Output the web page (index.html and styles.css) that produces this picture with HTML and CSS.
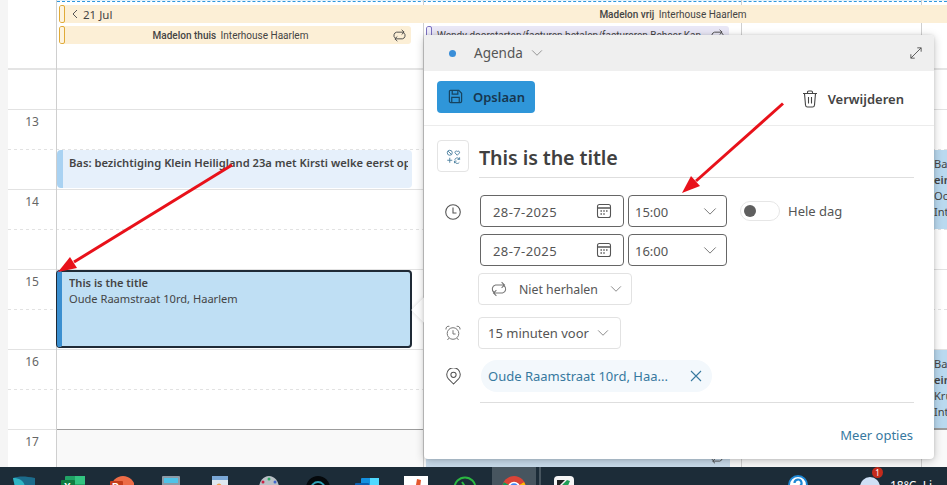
FILE: index.html
```html
<!DOCTYPE html>
<html lang="nl">
<head>
<meta charset="utf-8">
<title>Agenda</title>
<link rel="stylesheet" href="styles.css">
</head>
<body>
<svg class="sprites" width="0" height="0" aria-hidden="true">
  <symbol id="chev" viewBox="0 0 16 10"><path d="M1.500 1.500 8 8l6.500-6.500" fill="none" stroke="currentColor" stroke-width="1"/></symbol>
  <symbol id="cal" viewBox="0 0 16 16"><rect x="1.500" y="1.500" width="13" height="13" rx="2" fill="none" stroke="currentColor" stroke-width="1.100"/><path d="M1.500 5h13" stroke="currentColor" stroke-width="1.600"/><path d="M4.500 8h1.400M7.300 8h1.400M10.100 8h1.400M4.500 11h1.400M7.300 11h1.400" stroke="currentColor" stroke-width="1.300"/></symbol>
  <symbol id="rep" viewBox="0 0 18 18"><path d="M4 12.200A4 4 0 0 1 5.500 5h9M11.600 2.200 14.500 5l-2.900 2.800M14 5.800A4 4 0 0 1 12.500 13h-9M6.400 10.200 3.500 13l2.900 2.800" fill="none" stroke="currentColor" stroke-width="1.100"/></symbol>
</svg>
<div class="app">
  <main class="cal">
    <div class="rail"></div>
    <div class="sheet">
      <section class="allday">
        <div class="allday-time"></div>
        <div class="allday-body">
          <div class="dashline"></div>
          <div class="bar bar-amber bar-wide">
            <span class="mark"></span>
            <span class="bar-prev"><svg class="prev-ic" viewBox="0 0 6 10"><path d="M5 1 1 5l4 4" fill="none" stroke="currentColor"/></svg>21 Jul</span>
            <span class="bar-center"><b>Madelon vrij</b> Interhouse Haarlem</span>
          </div>
          <div class="allday-row">
            <div class="bar bar-amber bar-first">
              <span class="mark"></span>
              <span class="bar-center"><b>Madelon thuis</b> Interhouse Haarlem</span>
              <svg class="bar-rep"><use href="#rep"/></svg>
            </div>
            <div class="bar bar-purple">
              <span class="mark mark-purple"></span>
              <span class="bar-left">Wendy doorstarten/facturen betalen/factureren Beheer Kan</span>
              <svg class="bar-rep"><use href="#rep"/></svg>
            </div>
          </div>
        </div>
      </section>
      <section class="hours">
        <div class="hour hour-short"><span class="hlabel"></span></div>
        <div class="hour"><span class="hlabel">13</span></div>
        <div class="hour"><span class="hlabel">14</span></div>
        <div class="hour"><span class="hlabel">15</span></div>
        <div class="hour"><span class="hlabel">16</span></div>
        <div class="hour hour-last"><span class="hlabel">17</span><div class="last-cell"></div></div>
      </section>
      <div class="vlines"><i></i><i></i><i></i><i></i></div>
    </div>

    <div class="event event-soft"><span class="event-title">Bas: bezichtiging Klein Heiligland 23a met Kirsti welke eerst op</span></div>
    <div class="event event-sel">
      <span class="event-title">This is the title</span>
      <span class="event-line">Oude Raamstraat 10rd, Haarlem</span>
    </div>
    <div class="event event-under"><svg class="under-rep"><use href="#rep"/></svg></div>
    <div class="event event-side event-side-a">
      <span class="event-line">Ba</span><span class="event-title">ein</span><span class="event-line">Oc</span><span class="event-line">Int</span>
    </div>
    <div class="event event-side event-side-b">
      <span class="event-line">Ba</span><span class="event-title">ein</span><span class="event-line">Kru</span><span class="event-line">Int</span>
    </div>

    <div class="beak"></div>
    <aside class="popup">
      <header class="pop-head">
        <span class="dot"></span>
        <span class="pop-cal">Agenda</span>
        <svg class="chev chev-head"><use href="#chev"/></svg>
        <svg class="expand" viewBox="0 0 14 14"><path d="M8.500 1H13v4.500M13 1 1 13M1 8.500V13h4.500" fill="none" stroke="currentColor" stroke-width="1.100"/></svg>
      </header>
      <div class="pop-tools">
        <button class="btn-save">
          <svg class="save-ic" viewBox="0 0 16 16"><path d="M2.500 1.500h9l3 3v8.500a1.500 1.500 0 0 1-1.500 1.500H3A1.500 1.500 0 0 1 1.500 13V2.500a1 1 0 0 1 1-1z" fill="none" stroke="currentColor" stroke-width="1.300"/><path d="M4.500 2v3.500h6V2M4 14.500V9h8v5.500" fill="none" stroke="currentColor" stroke-width="1.300"/></svg>
          Opslaan
        </button>
        <span class="btn-del">
          <svg class="trash" viewBox="0 0 16 18"><path d="M1 3.500h14M5.500 3.500V2.200c0-.7.500-1.200 1.200-1.200h2.600c.7 0 1.200.5 1.200 1.200v1.300M2.500 3.500l1 11.500c.1 1.100.9 2 2 2h5c1.100 0 1.900-.9 2-2l1-11.500M6.500 7v6.500M9.500 7v6.500" fill="none" stroke="currentColor" stroke-width="1.100"/></svg>
          Verwijderen
        </span>
      </div>
      <div class="pop-body">
        <div class="title-row">
          <span class="cat-box">
            <svg class="cat-ic" viewBox="0 0 18 18"><g fill="none" stroke="currentColor" stroke-width="1.100"><circle cx="4.500" cy="4.500" r="3"/><path d="M2.500 2.500l4 4"/><path d="M13.500 7.500 10.800 4.600a1.600 1.600 0 0 1 2.700-1.600 1.600 1.600 0 0 1 2.700 1.600z"/><path d="M4.500 10.500v6M1.500 13.500h6M10.500 13a3 3 0 0 1 5-1.500l.8.800M16 16a3 3 0 0 1-5 0l-.8-.8M16.300 10v2.500h-2.500M10.200 17v-2.500h2.500"/></g></svg>
          </span>
          <h1 class="title">This is the title</h1>
        </div>

        <div class="form-row form-dates">
          <svg class="side-ic" viewBox="0 0 16 16"><circle cx="8" cy="8" r="7.300" fill="none" stroke="currentColor" stroke-width="1.100"/><path d="M8 3.500V9h3.500" fill="none" stroke="currentColor" stroke-width="1.100"/></svg>
          <div class="dates">
            <div class="date-line">
              <span class="field f-date"><span class="date-text">28-7-2025</span><svg class="cal-ic"><use href="#cal"/></svg></span>
              <span class="field f-time"><span class="date-time">15:00</span><svg class="chev chev-time"><use href="#chev"/></svg></span>
              <span class="toggle"><span class="knob"></span></span>
              <span class="toggle-label">Hele dag</span>
            </div>
            <div class="date-line">
              <span class="field f-date"><span class="date-text">28-7-2025</span><svg class="cal-ic"><use href="#cal"/></svg></span>
              <span class="field f-time"><span class="date-time">16:00</span><svg class="chev chev-time"><use href="#chev"/></svg></span>
            </div>
          </div>
        </div>

        <div class="form-row form-repeat">
          <span class="drop drop-rep">
            <svg class="rep-ic"><use href="#rep"/></svg>
            Niet herhalen
            <svg class="chev chev-end"><use href="#chev"/></svg>
          </span>
        </div>

        <div class="form-row form-alarm">
          <svg class="side-ic side-alarm" viewBox="0 0 16 16"><g fill="none" stroke="currentColor" stroke-width="1"><circle cx="8" cy="8.500" r="5.800"/><path d="M8 5.200v3.800h2.600M1 4.500C.6 2.500 2.300.7 4.400 1.300M15 4.500c.4-2-1.300-3.800-3.400-3.200M3.800 13.200 2.500 15M12.200 13.200l1.300 1.800"/></g></svg>
          <span class="drop drop-alarm">15 minuten voor<svg class="chev"><use href="#chev"/></svg></span>
        </div>

        <div class="form-row form-loc">
          <svg class="side-ic side-pin" viewBox="0 0 16 18"><g fill="none" stroke="currentColor" stroke-width="1.100"><path d="M8 17 2.600 11.600a7.200 7.200 0 1 1 10.800 0z"/><circle cx="8" cy="7.200" r="2.800"/></g></svg>
          <span class="pill">
            <span class="pill-text">Oude Raamstraat 10rd, Haa...</span>
            <svg class="pill-x" viewBox="0 0 12 12"><path d="M1 1l10 10M11 1 1 11" fill="none" stroke="currentColor" stroke-width="1.100"/></svg>
          </span>
        </div>

        <div class="rule"></div>
        <a class="more">Meer opties</a>
      </div>
    </aside>

    <svg class="arrows" viewBox="0 0 947 467">
      <path class="arrow-line" d="M232 165 74 262"/>
      <path class="arrow-head" d="M58 272 77 268 70 257z"/>
      <path class="arrow-line" d="M783 103.500 696 181"/>
      <path class="arrow-head" d="M682 193 700 186 691 176z"/>
    </svg>
  </main>

  <footer class="taskbar">
    <div class="tb-apps">
      <svg class="tb-ic" viewBox="0 0 24 24"><path d="M1 2c6-2 12-2 22 0v22H6z" fill="#1c6c8c"/><path d="M1 2c7 0 11 3 12 9L9 24H6z" fill="#2fb5c4"/></svg>
      <svg class="tb-ic" viewBox="0 0 24 24"><rect x="4" width="20" height="24" rx="1" fill="#21a366"/><rect x="14" width="10" height="8" fill="#33c481"/><rect y="4" width="14" height="14" rx="1" fill="#107c41"/><text class="tb-letter" x="3" y="15">X</text></svg>
      <svg class="tb-ic" viewBox="0 0 24 24"><circle cx="13" cy="12" r="12" fill="#ed6c47"/><rect y="5" width="13" height="14" rx="1" fill="#c43e1c"/><text class="tb-letter" x="2" y="15">P</text></svg>
      <svg class="tb-ic tb-narrow" viewBox="0 0 18 24"><rect width="18" height="24" rx="1" fill="#8c9aa6"/><rect x="2" y="2" width="14" height="5" fill="#4fc3e8"/><path d="M2 9h4v3H2zM7 9h4v3H7zM12 9h4v3h-4z" fill="#3f4a55"/></svg>
      <svg class="tb-ic tb-narrow" viewBox="0 0 16 24"><rect width="16" height="24" fill="#dfe8f0"/><rect width="16" height="4" fill="#7aa7d6"/><circle cx="7" cy="10" r="2.500" fill="#f0a050"/><path d="M11 9h4v1.500h-4z" fill="#7aa7d6"/></svg>
      <svg class="tb-ic" viewBox="0 0 24 24"><ellipse cx="12" cy="12" rx="10" ry="12" fill="#b9c0c6"/><circle cx="6" cy="6" r="1.500" fill="#c24"/><circle cx="12" cy="3" r="1.500" fill="#3a6"/><circle cx="18" cy="6" r="1.500" fill="#46c"/></svg>
      <svg class="tb-ic" viewBox="0 0 24 24"><circle cx="12" cy="12" r="12" fill="#05090c"/><path d="M5 13a7 7 0 0 1 14 0M8 14a4 4 0 0 1 8 0" fill="none" stroke="#2f9fb3" stroke-width="1.800"/></svg>
      <svg class="tb-ic" viewBox="0 0 24 24"><rect x="6" y="2" width="18" height="22" rx="1" fill="#1490df"/><rect x="15" y="2" width="9" height="7" fill="#50d9ff"/><rect y="7" width="14" height="14" rx="1" fill="#0a5fb0"/><circle cx="7" cy="14" r="3" fill="none" stroke="#fff" stroke-width="1.500"/></svg>
      <svg class="tb-ic" viewBox="0 0 24 24"><rect width="24" height="24" fill="#fff"/><path d="M8 11l4-2 1-6 4 1-1 8 3 2-2 8H8z" fill="#e4572e"/></svg>
      <svg class="tb-ic" viewBox="0 0 24 24"><circle cx="12" cy="12" r="10.500" fill="none" stroke="#2bb741" stroke-width="2"/><path d="M9 6l2 3-1 2 4 4 2-1 2 2" fill="none" stroke="#2bb741" stroke-width="2"/></svg>
      <span class="tb-active">
        <svg class="tb-ic" viewBox="0 0 24 24"><circle cx="12" cy="12" r="12" fill="#db4437"/><path d="M12 12 22 6a12 12 0 0 1-8 18z" fill="#fbbc05"/><path d="M12 12 14 24A12 12 0 0 1 2 6z" fill="#0f9d58"/><path d="M12 6a12 12 0 0 1 10 0l-10 6L2 6z" fill="#db4437"/><circle cx="12" cy="12" r="5.500" fill="#4285f4" stroke="#fff" stroke-width="1.500"/></svg>
      </span>
      <svg class="tb-ic tb-last" viewBox="0 0 20 24"><rect width="20" height="24" rx="4" fill="#f5f5f5"/><path d="M5 12l8-8 3 1-3 7 3 2-8 6z" fill="#1f9d55"/><path d="M3 4h8L5 10H3z" fill="#222"/></svg>
    </div>
    <div class="tb-tray">
      <svg class="tb-help" viewBox="0 0 20 20"><circle cx="10" cy="10" r="9" fill="#fff" stroke="#1e88d6" stroke-width="2"/><path d="M6.500 8a3.500 3.500 0 1 1 5 3.200c-1 .6-1.500 1-1.500 2.300" fill="none" stroke="#1e88d6" stroke-width="2.200"/></svg>
      <span class="tb-weather"><span class="cloud"></span><span class="badge">1</span></span>
      <span class="tb-temp">18°C&nbsp;&nbsp;Li</span>
    </div>
  </footer>
</div>
</body>
</html>
```

FILE: styles.css
```css
* { box-sizing: border-box; }
html, body { margin: 0; height: 100%; }
body {
  font-family: "Noto Sans", "Open Sans", "Liberation Sans", sans-serif;
  color: #444;
  background: #fff;
  overflow: hidden;
}
.sprites { position: absolute; }
.app { width: 947px; height: 485px; display: flex; flex-direction: column; overflow: hidden; }

/* Calendar sheet */
.cal { position: relative; flex: 1; min-height: 0; display: flex; overflow: hidden; background: #fff; }
.rail { width: 8px; background: #f5f5f5; flex: none; }
.sheet { position: relative; flex: 1; min-width: 0; display: flex; flex-direction: column; }

.allday { height: 70px; flex: none; display: flex; border-bottom: 2px solid #e4e4e4; }
.allday-time { width: 48px; flex: none; }
.allday-body { flex: 1; min-width: 0; padding-left: 1px; display: flex; flex-direction: column; }
.dashline { height: 5px; border-top: 1px solid #e4f2fb; }
.dashline::after { content: ""; display: block; border-top: 1px dashed #2f97dc; }
.bar {
  position: relative; z-index: 1; display: flex; align-items: center; height: 18px;
  font-size: 10.500px; color: #444; border-radius: 3px; overflow: hidden;
}
.bar b { font-weight: 500; margin-right: 2px; }
.bar-amber { background: #fcefd6; }
.bar-wide { margin-left: 2px; border-radius: 3px 0 0 3px; }
.mark {
  position: absolute; left: 0; top: 0; bottom: 0; width: 6px;
  border: 1px solid #e0aa38; border-radius: 2px; background: #fdf3df;
}
.mark-purple { border-color: #7a6fc0; background: #efedfa; bottom: -8px; }
.bar-prev { position: absolute; left: 13px; display: flex; align-items: center; gap: 5px; font-size: 11.500px; }
.prev-ic { width: 6px; height: 10px; color: #555; }
.bar-center { flex: 1; text-align: center; white-space: nowrap; font-family: Roboto, sans-serif; font-size: 10px; padding-left: 12px; }
.bar-wide .bar-center { padding-left: 340px; flex: none; width: 888px; }
.bar-left { padding-left: 11px; white-space: nowrap; overflow: hidden; flex: 1; font-family: Roboto, sans-serif; font-size: 10px; }
.bar-rep { flex: none; width: 15px; height: 15px; margin: 0 4px 0 2px; color: #444; }
.allday-row { display: flex; margin-top: 3px; margin-left: 2px; }
.bar-first { width: 352px; }
.bar-purple { width: 303px; margin-left: 15px; background: #e9e7f6; }

/* Hour rows */
.hours { flex: 1; min-height: 0; display: flex; flex-direction: column; }
.hour {
  display: flex; height: 80px; flex: none; border-bottom: 1px solid #e2e2e2;
  background: repeating-linear-gradient(90deg, #e2e2e2 0 3px, transparent 3px 6px) 0 39px / 100% 1px no-repeat;
}
.hour-short { height: 40px; background: none; }
.hour-last { flex: 1; height: auto; border-bottom: 0; background: none; }
.hlabel { width: 48px; flex: none; text-align: center; font-size: 12px; line-height: 16px; padding-top: 4px; color: #666; }
.last-cell { flex: 1; background: #f9f9f9; border-top: 1px solid #9c9c9c; margin-top: -1px; }
.vlines { position: absolute; inset: 0 0 0 48px; display: flex; pointer-events: none; }
.vlines i { display: block; border-left: 1px solid #cfcfcf; }
.vlines i:nth-child(1) { width: 367px; }
.vlines i:nth-child(2) { width: 318px; }
.vlines i:nth-child(3) { width: 180px; }
.vlines i:nth-child(4) { flex: 1; }

/* Events lie over the hour grid */
.event { position: absolute; display: flex; flex-direction: column; overflow: hidden; font-size: 11.100px; line-height: 16px; color: #444; white-space: nowrap; }
.event-title { font-weight: 600; overflow: hidden; }
.event-soft {
  left: 57px; top: 150px; width: 355px; height: 38px; border-radius: 4px;
  background: #e6f0fb; border-left: 6px solid #a9d2f2; padding: 5px 4px 0 6px; font-size: 11.200px;
}
.event-sel {
  left: 57px; top: 270px; width: 355px; height: 78px; border-radius: 4px;
  background: #bfdff4; border: 2px solid #1f2a36; border-left: 5px solid #3a8fd0;
  box-shadow: -1px 0 0 #1f2a36; padding: 3px 0 0 7px;
}
.event-under { left: 426px; top: 435px; width: 304px; height: 32px; background: #c9dcec; }
.under-rep { position: absolute; left: 284px; top: 16px; width: 14px; height: 14px; color: #444; }
.event-side { left: 922px; width: 25px; padding: 6px 0 0 12px; background: #b9d9ef; }
.event-side-a { top: 150px; height: 79px; }
.event-side-b { top: 350px; height: 79px; border-bottom: 1px solid #9c9c9c; }

/* Popup */
.beak {
  position: absolute; left: 415px; top: 301px; width: 18px; height: 18px;
  background: #fff; transform: rotate(45deg); z-index: 1;
  box-shadow: 0 0 4px rgba(0, 0, 0, .14);
}
.popup {
  position: absolute; left: 424px; top: 35px; width: 510px; height: 424px;
  background: #fff; border-radius: 4px; overflow: hidden; z-index: 2;
  box-shadow: 0 2px 10px rgba(0, 0, 0, .22), 0 0 3px rgba(0, 0, 0, .12);
  display: flex; flex-direction: column;
}
.pop-head { height: 36px; flex: none; background: #efefef; display: flex; align-items: center; padding: 0 12px 0 25px; font-size: 13.500px; color: #555; }
.dot { width: 7px; height: 7px; border-radius: 50%; background: #3a8ed8; }
.pop-cal { margin-left: 18px; }
.chev { width: 12px; height: 8px; color: #666; flex: none; }
.chev-head { margin-left: 8px; color: #777; }
.expand { width: 12px; height: 12px; margin-left: auto; color: #555; }
.pop-tools { height: 55px; flex: none; display: flex; align-items: center; justify-content: space-between; padding: 0 30px 0 13px; border-bottom: 1px solid #ececec; }
.btn-save {
  width: 98px; height: 32px; border: 0; border-radius: 4px; background: #2f96d9; color: #17364f;
  font: 600 13px "Noto Sans", sans-serif; display: flex; align-items: center; gap: 10px; padding: 0 0 0 11px;
  margin-top: -3px;
}
.save-ic { width: 15px; height: 15px; color: #17435f; }
.btn-del { display: flex; align-items: center; gap: 10px; font-size: 13px; font-weight: 600; color: #444; margin-top: 1px; }
.trash { width: 16px; height: 18px; color: #444; }
.pop-body { flex: 1; padding-left: 13px; padding-right: 20px; position: relative; display: flex; flex-direction: column; }
.title-row { display: flex; align-items: center; gap: 10px; margin-top: 14px; height: 32px; }
.cat-box { width: 32px; height: 32px; border: 1px solid #e4e4e4; border-radius: 4px; display: flex; align-items: center; justify-content: center; flex: none; }
.cat-ic { width: 15px; height: 15px; color: #4a7f9f; }
.title { margin: 0; font-size: 19.700px; font-weight: 600; color: #404040; line-height: 28px; padding-top: 4px; letter-spacing: -.1px; }
.form-row { display: flex; align-items: center; font-size: 13px; color: #555; white-space: nowrap; }
.form-dates { margin-top: 5px; padding-top: 18px; align-items: flex-start; position: relative; }
.form-dates::before { content: ""; position: absolute; left: 42px; right: 0; top: 0; border-top: 1px solid #dedede; }
.side-ic { width: 16px; height: 16px; margin-left: 8px; flex: none; color: #555; }
.form-dates .side-ic { margin-top: 9px; }
.dates { margin-left: 19px; display: flex; flex-direction: column; gap: 7px; }
.date-line { display: flex; align-items: center; gap: 4px; height: 32px; }
.field { height: 32px; border: 1px solid #666; border-radius: 4px; display: flex; align-items: center; justify-content: space-between; background: #fff; }
.date-text { letter-spacing: .4px; padding-top: 1px; }
.date-time { padding-top: 1px; }
.f-date { width: 144px; padding: 0 11px 0 12px; }
.f-time { width: 99px; padding: 0 9px 0 6px; }
.cal-ic { width: 16px; height: 16px; color: #555; }
.chev-time { width: 14px; height: 9px; }
.toggle { width: 40px; height: 20px; border: 1px solid #e6e6e6; border-radius: 10px; margin-left: 9px; display: flex; align-items: center; padding-left: 3px; }
.knob { width: 12px; height: 12px; border-radius: 50%; background: #5f5f5f; }
.toggle-label { margin-left: 4px; }
.form-repeat { margin-top: 7px; margin-left: 41px; }
.drop { height: 32px; border: 1px solid #e2e2e2; border-radius: 4px; display: flex; align-items: center; }
.drop-rep { width: 154px; padding: 0 9px 0 11px; gap: 11px; font-size: 12.300px; }
.chev-end { margin-left: auto; }
.rep-ic { width: 18px; height: 18px; color: #777; flex: none; }
.form-alarm { margin-top: 12px; }
.side-alarm { color: #777; }
.drop-alarm { width: 143px; margin-left: 17px; padding: 0 11px 0 9px; justify-content: space-between; }
.form-loc { margin-top: 11px; }
.side-pin { height: 17px; width: 15px; margin-left: 9px; }
.pill { width: 231px; height: 32px; border-radius: 16px; background: #f3f8fc; margin-left: 20px; padding: 0 10px 0 7px; display: flex; align-items: center; justify-content: space-between; color: #37799f; white-space: nowrap; }
.pill-x { width: 12px; height: 12px; flex: none; }
.rule { margin-top: 10px; margin-left: 43px; border-top: 1px solid #dedede; }
.more { align-self: flex-end; margin-top: 23px; margin-right: 1px; font-size: 13px; color: #37799f; }

/* Annotation arrows */
.arrows { position: absolute; inset: 0; width: 947px; height: 467px; z-index: 4; pointer-events: none; }
.arrow-line { fill: none; stroke: #e8111a; stroke-width: 3; }
.arrow-head { fill: #e8111a; }

/* Taskbar */
.taskbar { height: 18px; flex: none; background: #1c2c38; display: flex; justify-content: space-between; overflow: hidden; }
.tb-apps { display: flex; gap: 25px; padding: 9px 0 0 12px; align-items: flex-start; }
.tb-ic { width: 24px; height: 24px; flex: none; }
.tb-narrow { width: 18px; margin: 0 3px; }
.tb-letter { font: 700 10px "Liberation Sans", sans-serif; fill: #fff; }
.tb-active { width: 44px; height: 18px; margin: -9px -10px 0; background: #47555f; padding: 9px 0 0 10px; flex: none; box-shadow: 3px 0 0 #1c2c38, 5px 0 0 #47555f; }
.tb-last { width: 20px; margin-left: 3px; }
.tb-tray { display: flex; align-items: flex-start; padding-top: 8px; position: relative; }
.tb-help { width: 20px; height: 20px; margin-right: 52px; }
.tb-weather { position: relative; width: 20px; height: 20px; margin-right: 10px; }
.cloud { position: absolute; left: 0; top: 2px; width: 20px; height: 20px; border-radius: 50%; background: #cfe0f5; }
.badge { position: absolute; left: 12px; top: -8px; width: 11px; height: 11px; border-radius: 50%; background: #c42b1c; color: #fff; font-size: 8px; line-height: 11px; text-align: center; }
.tb-temp { font-size: 12px; line-height: 16px; color: #fff; white-space: nowrap; width: 57px; overflow: hidden; margin-top: 3px; }
```
